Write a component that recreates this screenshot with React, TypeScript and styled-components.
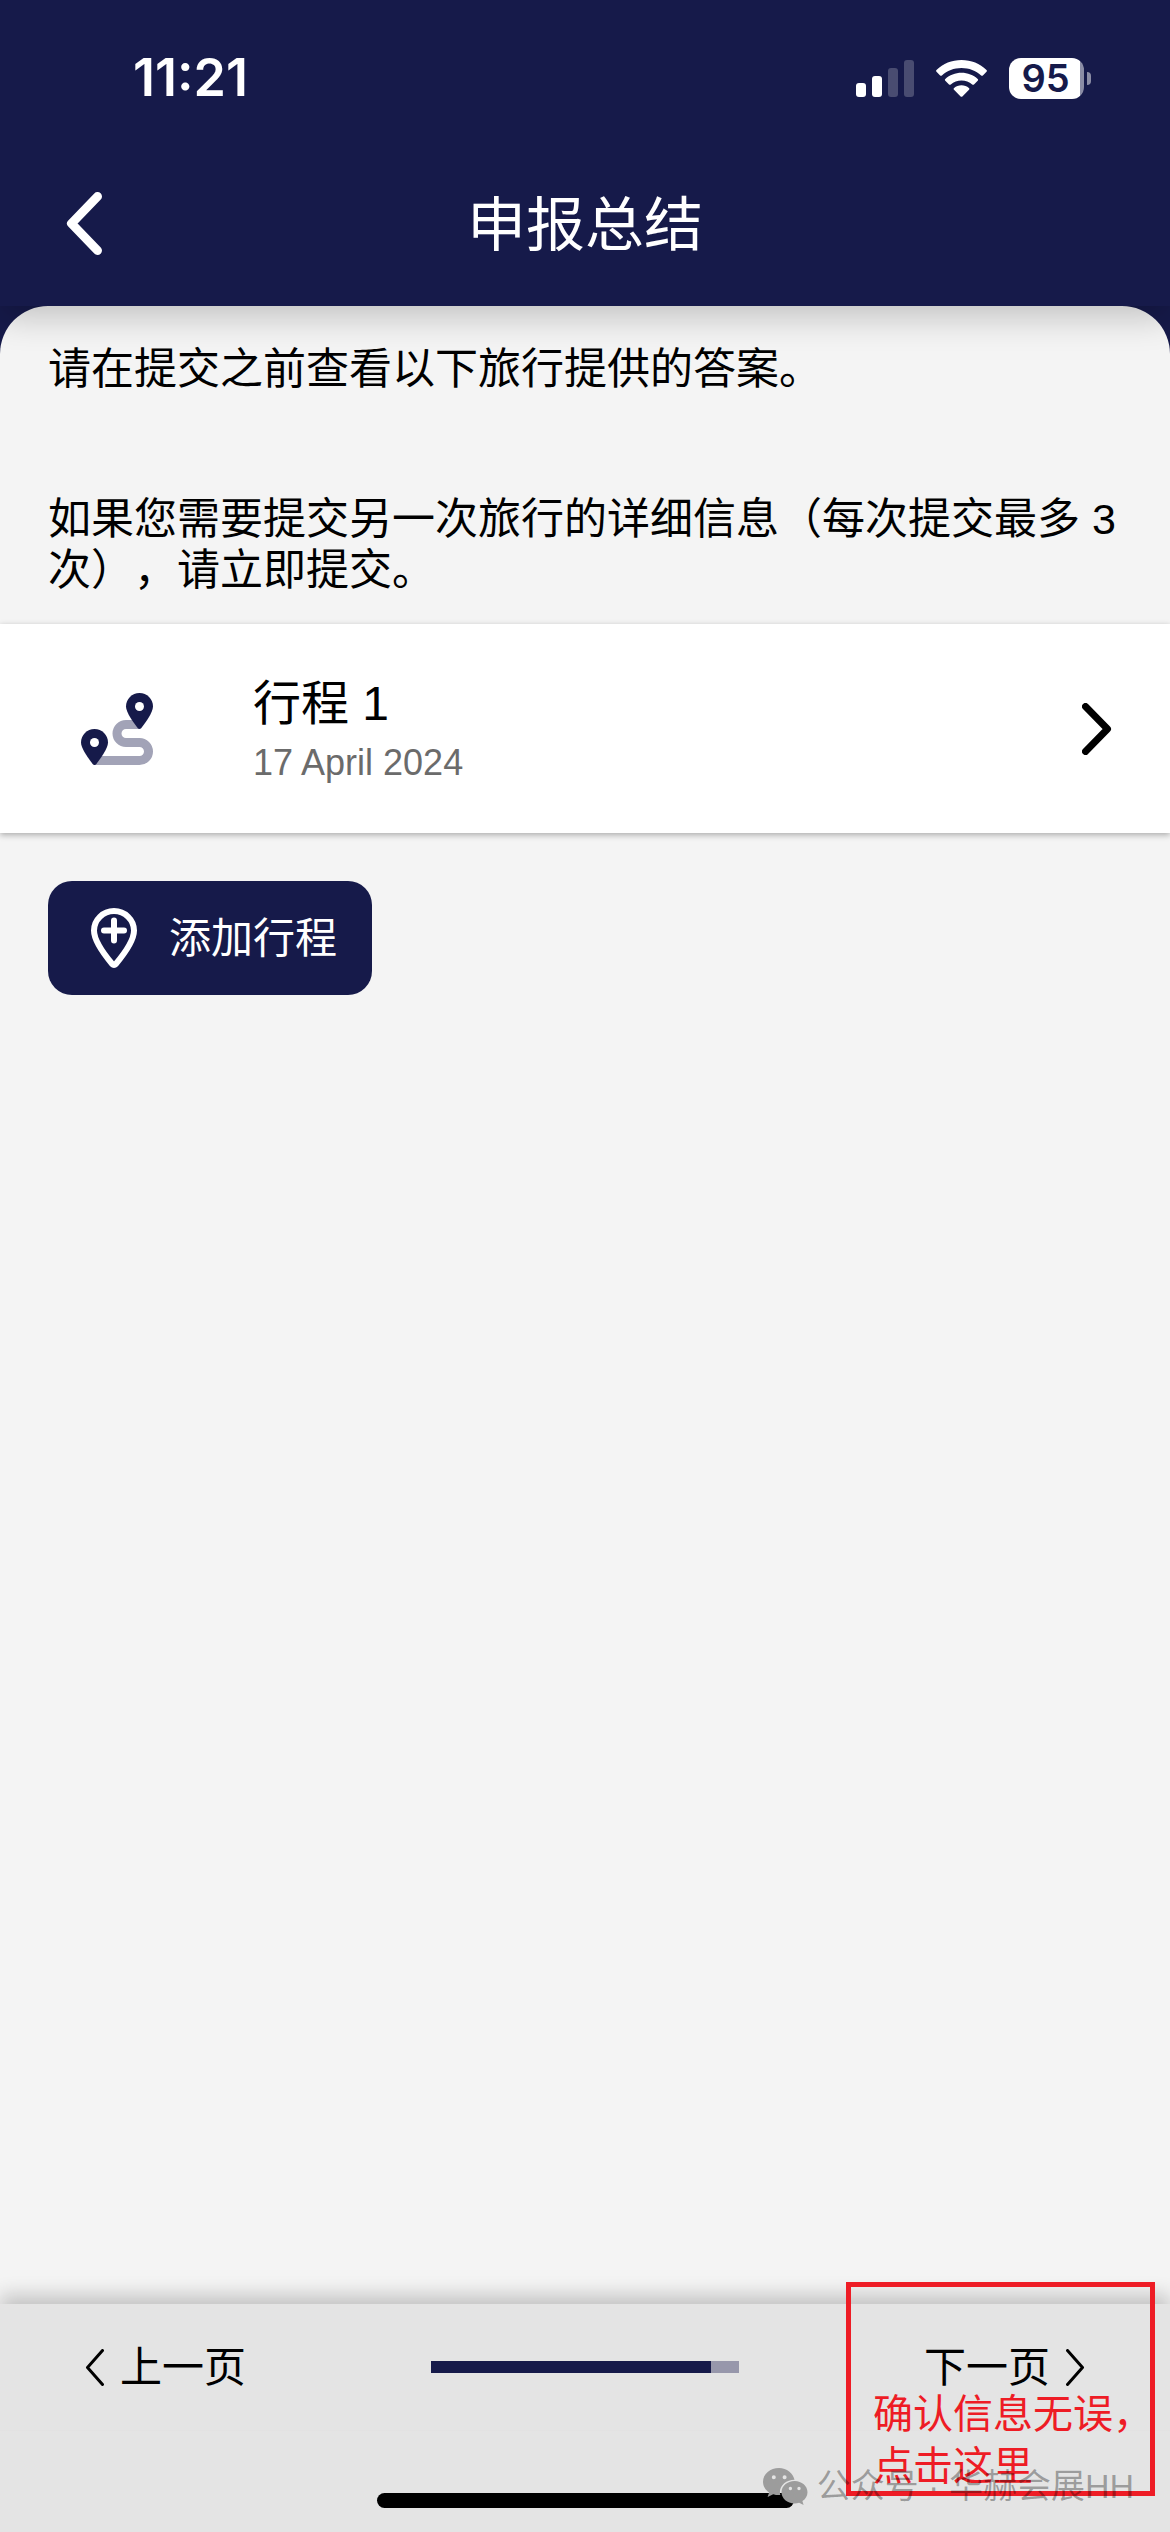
import React from "react";
import styled, { createGlobalStyle } from "styled-components";

const navy = "#161a4a";
const sheet = "#f4f4f4";
const bar = "#e4e4e4";
const red = "#ee1c25";
const sans = `"Liberation Sans", Arial, "Noto Sans CJK SC", sans-serif`;

const GlobalStyle = createGlobalStyle`
  *, *::before, *::after { box-sizing: border-box; }
  body {
    margin: 0;
    background: ${bar};
    color: #000;
    font-family: ${sans};
    text-spacing-trim: space-all;
  }
  button { font: inherit; color: inherit; border: 0; padding: 0; background: none; cursor: pointer; }
  h1, h2, p { margin: 0; font-weight: 400; }
  svg { display: block; flex: none; }
`;

const Page = styled.div`
  display: flex;
  flex-direction: column;
  min-height: 100vh;
  background: ${navy};
`;

const Header = styled.header`
  position: relative;
  z-index: 1;
  background: ${navy};
  color: #fff;
  box-shadow: 0 12px 32px rgba(0, 0, 0, 0.2);
`;

const StatusBar = styled.div`
  display: flex;
  align-items: center;
  justify-content: space-between;
  height: 141px;
  padding: 15px 79px 0 133px;
`;

const Clock = styled.time`
  font-family: Inter, sans-serif;
  font-size: 52px;
  font-weight: 600;
  line-height: 60px;
`;

const StatusIcons = styled.div`
  display: flex;
  align-items: center;
  gap: 22px;
`;

const Battery = styled.div`
  display: flex;
  align-items: center;
  gap: 3px;
`;

const BatteryBody = styled.span`
  display: flex;
  align-items: center;
  justify-content: center;
  width: 75px;
  height: 41px;
  padding-right: 2px;
  border-radius: 12px;
  background: linear-gradient(to right, #fff 71px, #8b8da5 71px);
  color: ${navy};
  font-family: Inter, sans-serif;
  font-size: 38px;
  font-weight: 600;
  line-height: 41px;
`;

const BatteryTip = styled.span`
  width: 4px;
  height: 13px;
  border-radius: 0 4px 4px 0;
  background: #8b8da5;
`;

const NavBar = styled.nav`
  display: grid;
  grid-template-columns: 1fr auto 1fr;
  align-items: center;
  height: 165px;
  padding: 0 66px;
`;

const BackButton = styled.button`
  justify-self: start;
`;

const Title = styled.h1`
  padding-top: 4px;
  font-size: 59px;
  line-height: 72px;
`;

const Sheet = styled.main`
  flex: 1;
  padding-top: 38px;
  border-radius: 48px 48px 0 0;
  background: ${sheet};
`;

const Intro = styled.div`
  display: flex;
  flex-direction: column;
  gap: 99px;
  padding: 0 48px 28px;
  font-size: 43px;
  line-height: 51px;
`;

const TripCard = styled.button`
  display: flex;
  align-items: center;
  width: 100%;
  padding: 48px 58px 48px 81px;
  background: #fff;
  box-shadow: 0 2px 6px rgba(0, 0, 0, 0.3);
  text-align: left;
`;

const TripText = styled.span`
  display: flex;
  flex: 1;
  flex-direction: column;
  gap: 6px;
  padding: 2px 0 0 100px;
`;

const TripName = styled.span`
  font-size: 48px;
  line-height: 60px;
`;

const TripDate = styled.span`
  color: #6b6b6b;
  font-size: 36px;
  line-height: 45px;
`;

const AddButton = styled.button`
  display: flex;
  align-items: center;
  gap: 32px;
  height: 114px;
  margin: 48px;
  padding: 0 35px 0 43px;
  border-radius: 24px;
  background: ${navy};
  color: #fff;
  font-size: 42px;
  line-height: 51px;
`;

const Footer = styled.footer`
  position: relative;
  background: ${bar};
  box-shadow: 0 -9px 18px rgba(0, 0, 0, 0.2);
`;

const Pager = styled.div`
  display: grid;
  grid-template-columns: 1fr 308px 1fr;
  align-items: center;
  height: 127px;
  padding: 0 85px;
  border-bottom: 1px solid #e2e2e2;
`;

const PageButton = styled.button<{ $end?: boolean }>`
  display: flex;
  align-items: center;
  gap: 16px;
  justify-self: ${(p) => (p.$end ? "end" : "start")};
  font-size: 42px;
  line-height: 51px;
`;

const Progress = styled.div`
  height: 12px;
  background: #9797ab;
`;

const ProgressFill = styled.div`
  height: 100%;
  background: ${navy};
`;

const HomeArea = styled.div`
  display: flex;
  justify-content: center;
  align-items: flex-end;
  height: 101px;
  padding-bottom: 24px;
`;

const HomeIndicator = styled.span`
  width: 417px;
  height: 15px;
  border-radius: 8px;
  background: #000;
`;

const Callout = styled.p`
  position: absolute;
  right: 15px;
  bottom: 36px;
  width: 309px;
  height: 214px;
  padding: 101px 0 0 22px;
  border: 5px solid ${red};
  color: ${red};
  font-size: 40px;
  line-height: 52px;
  white-space: nowrap;
  pointer-events: none;
`;

const Watermark = styled.div`
  position: absolute;
  right: 36px;
  bottom: 25px;
  display: flex;
  align-items: center;
  gap: 9px;
  color: rgba(0, 0, 0, 0.32);
  font-size: 34px;
  line-height: 42px;
  white-space: nowrap;
  pointer-events: none;
`;

type ChevronProps = { dir: "left" | "right"; width: number; height: number; stroke: number };

function Chevron({ dir, width, height, stroke }: ChevronProps) {
  const s = stroke / 2;
  const tip = dir === "left" ? s + 1 : width - s - 1;
  const back = dir === "left" ? width - s : s;
  return (
    <svg width={width} height={height} fill="none" stroke="currentColor" strokeWidth={stroke} strokeLinecap="round" strokeLinejoin="round" aria-hidden="true">
      <path d={`M${back} ${s}L${tip} ${height / 2}L${back} ${height - s}`} />
    </svg>
  );
}

function SignalIcon() {
  return (
    <svg width="58" height="37" viewBox="0 0 58 37" fill="#fff" aria-hidden="true">
      <rect x="0" y="23" width="10" height="14" rx="3" />
      <rect x="16" y="16" width="10" height="21" rx="3" />
      <rect x="32" y="8" width="10" height="29" rx="3" opacity="0.22" />
      <rect x="48" y="0" width="10" height="37" rx="3" opacity="0.22" />
    </svg>
  );
}

function WifiIcon() {
  return (
    <svg width="51" height="37" viewBox="0 0 51 37" fill="#fff" aria-hidden="true">
      <path d="M25.5 0C35.200 0 44 3.700 50.500 9.900c.6.6.6 1.300 0 1.900l-3.600 3.600c-.6.600-1.200.6-1.800 0C39.900 10.600 33 7.900 25.500 7.900S11.100 10.600 5.900 15.400c-.6.6-1.200.6-1.800 0L.5 11.800c-.6-.6-.6-1.300 0-1.900C7 3.700 15.800 0 25.500 0z" />
      <path d="M25.500 12.700c6.200 0 11.900 2.300 16.200 6.200.6.600.6 1.200 0 1.800L38 24.400c-.6.600-1.200.6-1.800 0-2.900-2.500-6.600-3.900-10.700-3.900s-7.800 1.400-10.700 3.900c-.6.6-1.200.6-1.800 0l-3.700-3.700c-.6-.6-.6-1.200 0-1.800 4.300-3.900 10-6.200 16.200-6.200z" />
      <path d="M25.500 25.300c2.800 0 5.400 1 7.400 2.600.7.600.7 1.200.1 1.800l-6.600 6.700c-.6.6-1.200.6-1.800 0L18 29.700c-.6-.6-.6-1.200.1-1.800 2-1.600 4.600-2.600 7.400-2.600z" />
    </svg>
  );
}

function RouteIcon() {
  const pin = "M13.5 0C6 0 0 6 0 13.500c0 6.200 8.300 17.100 11.900 21.700.9 1.100 2.300 1.100 3.200 0C18.700 30.600 27 19.700 27 13.500 27 6 21 0 13.500 0z";
  return (
    <svg width="72" height="72" viewBox="0 0 72 72" aria-hidden="true">
      <path d="M14 67.500H58.500a9 9 0 0 0 0-18H45a9 9 0 0 1 0-18H58" fill="none" stroke="#a2a3b7" strokeWidth="9" />
      <g fill={navy}>
        <path d={pin} transform="translate(0 36)" />
        <path d={pin} transform="translate(45 0)" />
      </g>
      <circle cx="13.500" cy="49.500" r="4.500" fill="#fff" />
      <circle cx="58.500" cy="13.500" r="4.500" fill="#fff" />
    </svg>
  );
}

function AddPinIcon() {
  return (
    <svg width="46" height="60" viewBox="0 0 46 60" fill="none" stroke="#fff" strokeWidth="6" strokeLinecap="round" strokeLinejoin="round" aria-hidden="true">
      <path d="M23 3C11.900 3 3 11.900 3 22.500c0 10.500 11.500 25.500 18.400 33.700.9 1 2.300 1 3.200 0C31.500 48 43 33 43 22.500 43 11.900 34.100 3 23 3z" />
      <path d="M23 12.500v20M13 22.500h20" />
    </svg>
  );
}

function ChatBubblesIcon() {
  return (
    <svg width="45" height="37" viewBox="0 0 45 37" aria-hidden="true">
      <path fill="#9c9c9c" fillRule="evenodd" d="M16 0C7.200 0 0 6 0 13.700c0 4.400 2.400 8.200 6.100 10.700L4.600 29l5.600-2.800c1.800.5 3.700.9 5.800.9h1.300a11.500 11.500 0 0 1-.4-3c0-6.900 6.600-12.300 14.600-12.300C30.200 5.200 23.800 0 16 0zM10.800 7.200a2 2 0 1 1 0 4 2 2 0 0 1 0-4zm10.800 0a2 2 0 1 1 0 4 2 2 0 0 1 0-4z" />
      <path fill="#9c9c9c" fillRule="evenodd" d="M31.600 13c-7.300 0-13.100 5-13.100 11.200s5.800 11.200 13.100 11.200c1.600 0 3.100-.3 4.500-.7l4.500 2.300-1.200-3.900c3.100-2 5.100-5.200 5.100-8.900C44.500 18 38.900 13 31.600 13zm-4.200 5.800a1.700 1.700 0 1 1 0 3.400 1.700 1.700 0 0 1 0-3.400zm8.600 0a1.700 1.700 0 1 1 0 3.400 1.700 1.700 0 0 1 0-3.400z" />
    </svg>
  );
}

export default function App() {
  const progress = 91;
  return (
    <Page lang="zh-CN">
      <GlobalStyle />
      <Header>
        <StatusBar>
          <Clock>11:21</Clock>
          <StatusIcons>
            <SignalIcon />
            <WifiIcon />
            <Battery>
              <BatteryBody>95</BatteryBody>
              <BatteryTip />
            </Battery>
          </StatusIcons>
        </StatusBar>
        <NavBar>
          <BackButton type="button" aria-label="返回">
            <Chevron dir="left" width={36} height={63} stroke={9} />
          </BackButton>
          <Title>申报总结</Title>
        </NavBar>
      </Header>

      <Sheet>
        <Intro>
          <p>请在提交之前查看以下旅行提供的答案。</p>
          <p>如果您需要提交另一次旅行的详细信息（每次提交最多 3 次），请立即提交。</p>
        </Intro>
        <TripCard type="button">
          <RouteIcon />
          <TripText>
            <TripName>行程 1</TripName>
            <TripDate>17 April 2024</TripDate>
          </TripText>
          <Chevron dir="right" width={30} height={52} stroke={7} />
        </TripCard>
        <AddButton type="button">
          <AddPinIcon />
          添加行程
        </AddButton>
      </Sheet>

      <Footer>
        <Pager>
          <PageButton type="button">
            <Chevron dir="left" width={19} height={37} stroke={3} />
            上一页
          </PageButton>
          <Progress role="progressbar" aria-label="进度" aria-valuenow={progress} aria-valuemin={0} aria-valuemax={100}>
            <ProgressFill style={{ width: `${progress}%` }} />
          </Progress>
          <PageButton type="button" $end>
            下一页
            <Chevron dir="right" width={19} height={37} stroke={3} />
          </PageButton>
        </Pager>
        <HomeArea>
          <HomeIndicator />
        </HomeArea>
        <Callout>
          确认信息无误，
          <br />
          点击这里
        </Callout>
        <Watermark>
          <ChatBubblesIcon />
          <span>公众号 · 华赫会展HH</span>
        </Watermark>
      </Footer>
    </Page>
  );
}
